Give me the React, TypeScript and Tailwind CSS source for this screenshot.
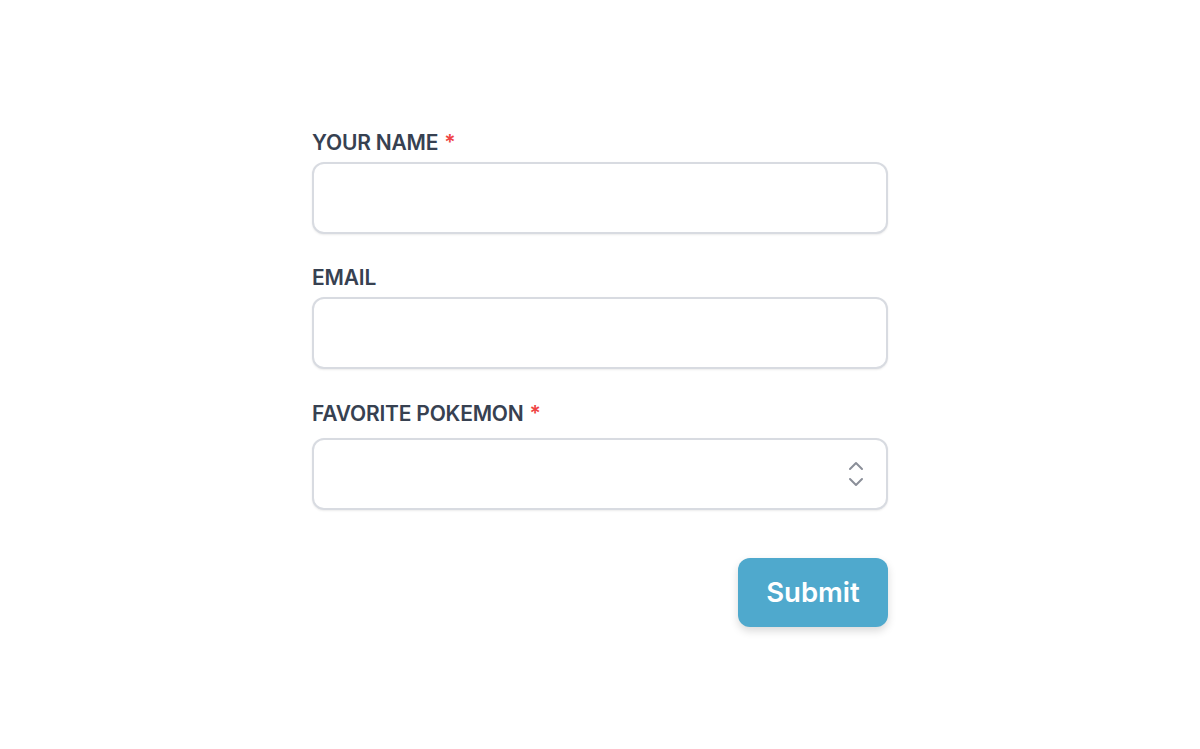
import React from "react";

function Label({ text, required }: { text: string; required?: boolean }) {
  return (
    <label className="block text-[21px] leading-[28px] font-semibold text-[#374151] tracking-[-0.2px]">
      {text}
      {required && <span className="ml-[6px] text-[#ef4444]">*</span>}
    </label>
  );
}

export default function App() {
  return (
    <div
      className="w-[1200px] h-[749px] bg-white flex justify-center"
      style={{ fontFamily: "Inter, 'Noto Sans', sans-serif" }}
    >
      <form className="w-[576px] mt-[129px] flex flex-col">
        <Label text="YOUR NAME" required />
        <input className="mt-[5px] h-[72px] w-full rounded-[12px] border-2 border-[#d8dbe1] bg-white shadow-[0_1px_2px_rgba(0,0,0,0.08)] outline-none" />
        <div className="mt-[30px]">
          <Label text="EMAIL" />
        </div>
        <input className="mt-[5px] h-[72px] w-full rounded-[12px] border-2 border-[#d8dbe1] bg-white shadow-[0_1px_2px_rgba(0,0,0,0.08)] outline-none" />
        <div className="mt-[31px]">
          <Label text="FAVORITE POKEMON" required />
        </div>
        <div className="relative mt-[10px] h-[72px] w-full rounded-[12px] border-2 border-[#d8dbe1] bg-white shadow-[0_1px_2px_rgba(0,0,0,0.08)] flex items-center justify-end pr-[22px]">
          <svg width="16" height="26" viewBox="0 0 16 26" fill="none" stroke="#8b8f99" strokeWidth="2" strokeLinecap="round" strokeLinejoin="round">
            <path d="M2 8 L8 2 L14 8" />
            <path d="M2 18 L8 24 L14 18" />
          </svg>
        </div>
        <div className="flex justify-end mt-[48px]">
          <button
            type="button"
            className="w-[150px] h-[69px] rounded-[12px] bg-[#4fa9cd] text-white text-[27.5px] font-semibold shadow-[0_4px_8px_rgba(0,0,0,0.15)]"
          >
            Submit
          </button>
        </div>
      </form>
    </div>
  );
}
